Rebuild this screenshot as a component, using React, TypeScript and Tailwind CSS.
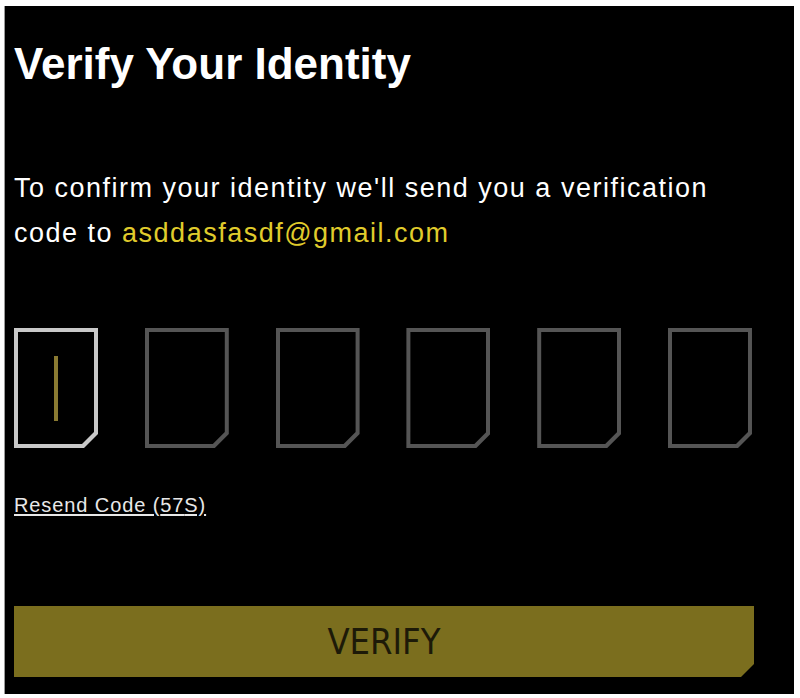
import { useState } from 'react';

const CODE_LENGTH = 6;

function CodeBox({ active }: { active: boolean }) {
  return (
    <div
      className={`w-[84px] h-[120px] p-[4px] [clip-path:polygon(0_0,100%_0,100%_calc(100%-14px),calc(100%-14px)_100%,0_100%)] ${
        active ? 'bg-[#c9c9c9]' : 'bg-[#555555]'
      }`}
    >
      <div className="w-full h-full bg-black flex items-center justify-center [clip-path:polygon(0_0,100%_0,100%_calc(100%-12px),calc(100%-12px)_100%,0_100%)]">
        {active && <div className="w-[4px] h-[65px] bg-[#8a7a32]" />}
      </div>
    </div>
  );
}

export default function App() {
  const [seconds] = useState(57);
  const email = 'asddasfasdf@gmail.com';

  return (
    <div className="w-[800px] h-[698px] bg-white pt-[6px] pl-[4px] pr-[6px] pb-[4px] font-['Liberation_Sans',Arial,sans-serif]">
      <div className="h-full bg-black border-l border-[#9a9a9a] pl-[9px] flex flex-col">
        <h1 className="mt-[32px] text-[44px] leading-[52px] font-bold text-white">
          Verify Your Identity
        </h1>

        <p className="mt-[76px] text-[27px] leading-[45px] tracking-[1.5px] text-white">
          To confirm your identity we'll send you a verification
          <br />
          code to <span className="text-[#e0cc2c]">{email}</span>
        </p>

        <div className="mt-[72px] w-[738px] flex justify-between">
          {Array.from({ length: CODE_LENGTH }).map((_, i) => (
            <CodeBox key={i} active={i === 0} />
          ))}
        </div>

        <a className="mt-[45px] self-start text-[20px] leading-[24px] tracking-[0.9px] text-[#e8e8e8] underline underline-offset-2">
          Resend Code ({seconds}S)
        </a>

        <button className="mt-[89px] w-[740px] h-[71px] bg-[#7b6e1e] text-[#1d1a08] text-[36px] font-['Liberation_Sans_Narrow','DejaVu_Sans_Condensed',sans-serif] [clip-path:polygon(0_0,100%_0,100%_calc(100%-13px),calc(100%-13px)_100%,0_100%)]">
          VERIFY
        </button>
      </div>
    </div>
  );
}
